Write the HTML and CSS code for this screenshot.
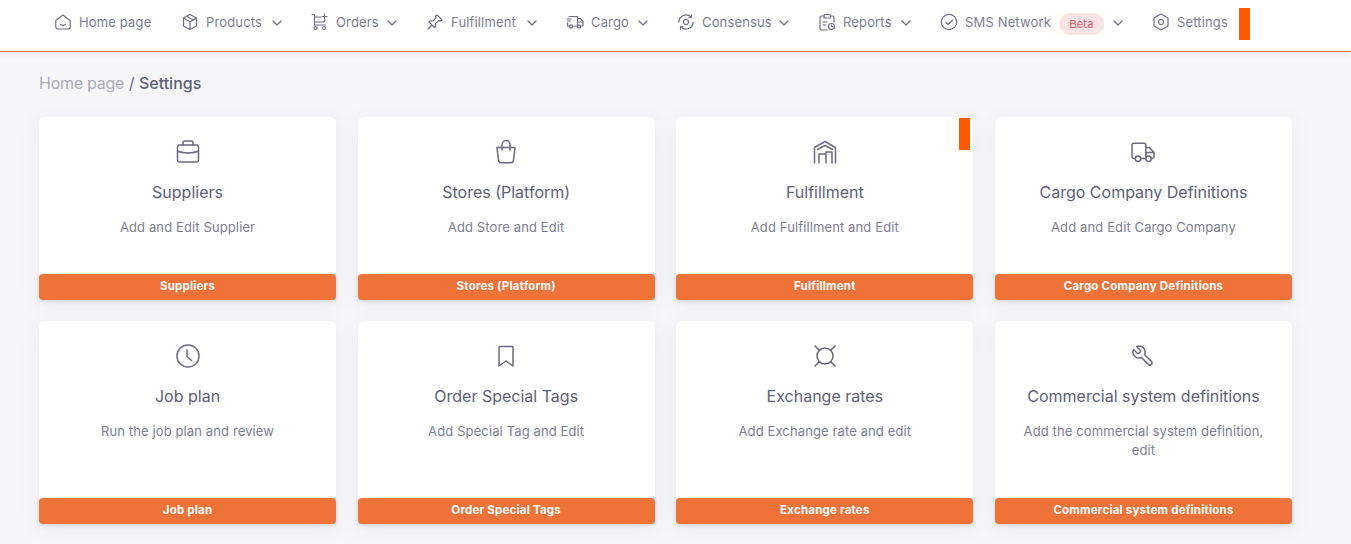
FILE: index.html
```html
<!DOCTYPE html>
<html lang="en">
<head>
<meta charset="utf-8">
<title>Settings</title>
<link rel="stylesheet" href="styles.css">
</head>
<body>
<header class="topbar">
  <nav class="nav">
    <a class="item"><svg class="ic" viewBox="0 0 18 18"><path d="M1.800 7.500 9 2l7.200 5.500V14a2 2 0 0 1-2 2H3.800a2 2 0 0 1-2-2z"/><path d="M6.500 11.500c1.500 1 3.500 1 5 0"/></svg><span>Home page</span></a>
    <a class="item"><svg class="ic" viewBox="0 0 18 18"><path d="M9 1.500l6.500 3.500v8L9 16.500 2.500 13V5z"/><path d="M2.500 5 9 8.800 15.500 5M9 8.800v7.700M5.700 3.300l6.500 3.700"/></svg><span>Products</span><svg class="chev" viewBox="0 0 10 6"><path d="M1 1l4 4 4-4"/></svg></a>
    <a class="item"><svg class="ic" viewBox="0 0 18 18"><path d="M1 1.500h2.500v10.500h11M3.500 4h6M3.500 9h9.500l1-2"/><circle cx="4.500" cy="15" r="1.500"/><circle cx="13" cy="15" r="1.500"/><path d="M13.500 1v5M11 3.500h5"/></svg><span>Orders</span><svg class="chev" viewBox="0 0 10 6"><path d="M1 1l4 4 4-4"/></svg></a>
    <a class="item"><svg class="ic" viewBox="0 0 18 18"><path d="M11 2l5 5-1.200.800-2.300-.200-3 3 .200 2.900-1.200 1-5.500-5.500 1-1.200 2.900.200 3-3-.200-2.300z"/><path d="M5.500 12.500 2 16"/></svg><span>Fulfillment</span><svg class="chev" viewBox="0 0 10 6"><path d="M1 1l4 4 4-4"/></svg></a>
    <a class="item"><svg class="ic" viewBox="0 0 18 18"><path d="M3 3.500h8.500v9.500H8M3 13H1.500v-3M1 6h4M1.500 8h3M11.500 5.500h3l2.500 3V13h-1.500M11.500 9H17"/><circle cx="5" cy="13.500" r="1.700"/><circle cx="13" cy="13.500" r="1.700"/></svg><span>Cargo</span><svg class="chev" viewBox="0 0 10 6"><path d="M1 1l4 4 4-4"/></svg></a>
    <a class="item"><svg class="ic" viewBox="0 0 18 18"><circle cx="9" cy="9" r="2.500"/><path d="M2 9a7 7 0 0 1 12-5M16 9a7 7 0 0 1-12 5M14.500 2v2.500H12M3.500 16v-2.500H6"/></svg><span>Consensus</span><svg class="chev" viewBox="0 0 10 6"><path d="M1 1l4 4 4-4"/></svg></a>
    <a class="item"><svg class="ic" viewBox="0 0 18 18"><path d="M6 3H3.500A1.500 1.500 0 0 0 2 4.500v11A1.500 1.500 0 0 0 3.500 17H9M13 3h1.500A1.500 1.500 0 0 1 16 4.500V9"/><rect x="6" y="1.500" width="6.500" height="3.500" rx="1"/><path d="M5 9h4M5 12h3"/><circle cx="13.500" cy="13.500" r="3"/><path d="M13.500 12v1.500h1.500"/></svg><span>Reports</span><svg class="chev" viewBox="0 0 10 6"><path d="M1 1l4 4 4-4"/></svg></a>
    <a class="item"><svg class="ic" viewBox="0 0 18 18"><circle cx="9" cy="9" r="7.700"/><path d="M6 9.300l2.200 2.200L12.500 7"/></svg><span>SMS Network</span><span class="badge">Beta</span><svg class="chev" viewBox="0 0 10 6"><path d="M1 1l4 4 4-4"/></svg></a>
    <a class="item item-last"><svg class="ic" viewBox="0 0 18 18"><path d="M9 1l7 4v8l-7 4-7-4V5z"/><circle cx="9" cy="9" r="2.500"/></svg><span>Settings</span></a>
    <span class="flag flag-nav"></span>
  </nav>
</header>
<main class="page">
  <p class="crumb"><span class="crumb-home">Home page</span> <span class="crumb-sep">/</span> <span class="crumb-now">Settings</span></p>
  <section class="grid">
    <article class="card">
      <svg class="card-ic" viewBox="0 0 24 24"><rect x="1.500" y="5" width="21" height="17" rx="2"/><path d="M7 5V3a2 2 0 0 1 2-2h6a2 2 0 0 1 2 2v2M1.500 11c5 2.500 16 2.500 21 0M12 12.800v.5"/></svg>
      <h2>Suppliers</h2><p>Add and Edit Supplier</p><a class="btn">Suppliers</a>
    </article>
    <article class="card">
      <svg class="card-ic" viewBox="0 0 24 24"><path d="M3 7.500h18l-1.500 12.500a3 3 0 0 1-3 2.800H7.500a3 3 0 0 1-3-2.800z"/><path d="M8 10V4.500a4 4 0 0 1 8 0V10"/></svg>
      <h2>Stores (Platform)</h2><p>Add Store and Edit</p><a class="btn">Stores (Platform)</a>
    </article>
    <article class="card">
      <svg class="card-ic" viewBox="0 0 24 24"><path d="M1.500 23V7.500L12 1.500l10.500 6V23"/><path d="M4.500 9.500 12 5.500l7.500 4"/><path d="M6 23v-9h7v9M13 23V12h6v11"/></svg>
      <h2>Fulfillment</h2><p>Add Fulfillment and Edit</p><a class="btn">Fulfillment</a>
      <span class="flag flag-card"></span>
    </article>
    <article class="card">
      <svg class="card-ic" viewBox="0 0 24 24"><path d="M4 18.500H2.800A1.800 1.800 0 0 1 1 16.700V5a1.800 1.800 0 0 1 1.800-1.800H13a1.800 1.800 0 0 1 1.800 1.800v13.500H10M14.800 7.500h3.700l4.500 5v4.200a1.800 1.800 0 0 1-1.800 1.800H20M14.800 12.500H23"/><circle cx="7" cy="18.800" r="2.700"/><circle cx="17.500" cy="18.800" r="2.700"/></svg>
      <h2>Cargo Company Definitions</h2><p>Add and Edit Cargo Company</p><a class="btn">Cargo Company Definitions</a>
    </article>
    <article class="card">
      <svg class="card-ic" viewBox="0 0 24 24"><circle cx="12" cy="12" r="11"/><path d="M11 6v6.500l4.500 4"/></svg>
      <h2>Job plan</h2><p>Run the job plan and review</p><a class="btn">Job plan</a>
    </article>
    <article class="card">
      <svg class="card-ic" viewBox="0 0 24 24"><path d="M6 2.500h12a1 1 0 0 1 1 1v18.500l-7-5-7 5V3.500a1 1 0 0 1 1-1z"/></svg>
      <h2>Order Special Tags</h2><p>Add Special Tag and Edit</p><a class="btn">Order Special Tags</a>
    </article>
    <article class="card">
      <svg class="card-ic" viewBox="0 0 24 24"><circle cx="12" cy="12" r="8"/><path d="M2 2l4.500 4.500M22 2l-4.500 4.500M2 22l4.500-4.500M22 22l-4.500-4.500"/></svg>
      <h2>Exchange rates</h2><p>Add Exchange rate and edit</p><a class="btn">Exchange rates</a>
    </article>
    <article class="card">
      <svg class="card-ic" viewBox="0 0 24 24"><path transform="translate(24 0) scale(-1 1)" d="M14.700 6.300a1 1 0 0 0 0 1.400l1.600 1.600a1 1 0 0 0 1.400 0l3.770-3.770a6 6 0 0 1-7.940 7.940l-6.910 6.910a2.120 2.120 0 0 1-3-3l6.910-6.910a6 6 0 0 1 7.940-7.940l-3.760 3.760z"/></svg>
      <h2>Commercial system definitions</h2><p>Add the commercial system definition, edit</p><a class="btn">Commercial system definitions</a>
    </article>
  </section>
</main>
</body>
</html>
```

FILE: styles.css
```css
* { box-sizing: border-box; }
html, body { margin: 0; height: 100%; }
body {
  background: #f7f7fa;
  font-family: Inter, "Liberation Sans", sans-serif;
  color: #676b80;
  overflow: hidden;
}
.topbar {
  height: 52px;
  background: #fff;
  border-bottom: 1px solid #d9694a;
  box-shadow: 0 2px 6px rgba(70, 70, 110, .06);
}
.nav {
  display: grid;
  grid-template-columns: 127px 130px 115px 140px 111px 141px 122px 212px auto;
  align-items: center;
  height: 44px;
  padding-left: 54px;
  font-size: 13px;
  letter-spacing: .15px;
  color: #7c7e92;
  position: relative;
}
.item {
  display: flex;
  align-items: center;
  padding-right: 29px;
  white-space: nowrap;
}
.item-last { padding-right: 0; }
.ic {
  width: 18px;
  height: 18px;
  margin-right: 7px;
  flex: none;
  fill: none;
  stroke: #6f6f85;
  stroke-width: 1.2;
  stroke-linecap: round;
  stroke-linejoin: round;
}
.chev {
  width: 10px;
  height: 6px;
  margin-left: auto;
  margin-top: 2px;
  flex: none;
  fill: none;
  stroke: #6f6f85;
  stroke-width: 1.3;
  stroke-linecap: round;
  stroke-linejoin: round;
}
.badge {
  background: #fce4e6;
  color: #ee5a67;
  font-size: 11px;
  height: 22px;
  line-height: 22px;
  width: 45px;
  text-align: center;
  border-radius: 11px;
  margin: 4px 0 0 8px;
}
.flag { background: #ff5a00; display: block; position: absolute; width: 11px; height: 32px; }
.flag-nav { left: 1239px; top: 8px; }
.flag-card { right: 3px; top: 1px; }
.page { padding: 0 59px 0 39px; }
.crumb {
  margin: 0 0 23px;
  padding-top: 21px;
  font-size: 16px;
  line-height: 21px;
}
.crumb-home { color: #aaaab8; letter-spacing: -.25px; }
.crumb-sep { color: #676b80; }
.crumb-now { color: #5d5f75; font-weight: 500; }
.grid {
  display: grid;
  grid-template-columns: repeat(4, 1fr);
  grid-template-rows: 183px 203px;
  gap: 21px 21.6px;
}
.card {
  position: relative;
  background: #fff;
  border-radius: 6px;
  box-shadow: 0 4px 22px rgba(70, 70, 110, .07);
  display: flex;
  flex-direction: column;
  align-items: center;
  text-align: center;
  padding-top: 23px;
}
.card-ic {
  width: 24px;
  height: 24px;
  flex: none;
  fill: none;
  stroke: #6a6a80;
  stroke-width: 1.5;
  stroke-linecap: round;
  stroke-linejoin: round;
}
.card h2 {
  margin: 16px 0 0;
  font-size: 16px;
  line-height: 24px;
  font-weight: 400;
  color: #5d5f75;
}
.card p {
  margin: 14px 0 0;
  padding: 0 20px;
  font-size: 13px;
  letter-spacing: .12px;
  line-height: 19px;
  color: #7c7e92;
}
.btn {
  margin-top: auto;
  align-self: stretch;
  height: 26px;
  line-height: 25px;
  background: #ef7238;
  color: #fff;
  font-size: 11.5px;
  letter-spacing: .2px;
  font-weight: 700;
  border-radius: 4px;
  box-shadow: 0 1px 4px rgba(70, 70, 110, .2);
}
```
